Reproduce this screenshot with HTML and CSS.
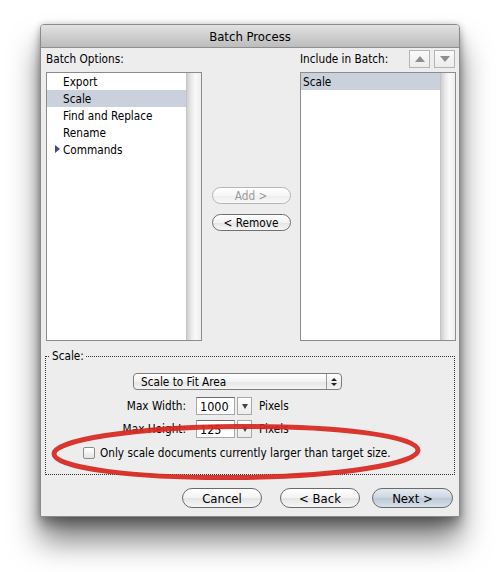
FILE: index.html
```html
<!DOCTYPE html>
<html lang="en">
<head>
    <meta charset="UTF-8">
    <title>Batch Process</title>
    <link rel="stylesheet" href="styles.css">
</head>
<body>
    <div class="window">
        <div class="titlebar">Batch Process</div>
        <div class="window-body">
            <div class="batch">
                <div class="col">
                    <div class="col-head">Batch Options:</div>
                    <div class="list">
                        <ul class="items">
                            <li>Export</li>
                            <li class="selected">Scale</li>
                            <li>Find and Replace</li>
                            <li>Rename</li>
                            <li><span class="disclosure"></span>Commands</li>
                        </ul>
                        <div class="scrollbar"></div>
                    </div>
                </div>
                <div class="middle">
                    <button class="pill disabled">Add &gt;</button>
                    <button class="pill">&lt; Remove</button>
                </div>
                <div class="col">
                    <div class="col-head">
                        <span>Include in Batch:</span>
                        <div class="order-buttons">
                            <button class="square"><span class="tri-up"></span></button>
                            <button class="square"><span class="tri-down"></span></button>
                        </div>
                    </div>
                    <div class="list">
                        <ul class="items included">
                            <li class="selected">Scale</li>
                        </ul>
                        <div class="scrollbar"></div>
                    </div>
                </div>
            </div>

            <fieldset class="options">
                <legend>Scale:</legend>
                <div class="popup">
                    <span class="popup-label">Scale to Fit Area</span>
                    <span class="popup-arrows">
                        <span class="mini-up"></span>
                        <span class="mini-down"></span>
                    </span>
                </div>
                <div class="field-row">
                    <span class="field-label">Max Width:</span>
                    <span class="text-box">1000</span>
                    <span class="combo-btn"><span class="tri-down dark"></span></span>
                    <span class="unit">Pixels</span>
                </div>
                <div class="field-row">
                    <span class="field-label">Max Height:</span>
                    <span class="text-box">125</span>
                    <span class="combo-btn"><span class="tri-down dark"></span></span>
                    <span class="unit">Pixels</span>
                </div>
                <label class="check-row">
                    <span class="checkbox"></span>
                    Only scale documents currently larger than target size.
                </label>
            </fieldset>

            <div class="actions">
                <button class="pill big">Cancel</button>
                <button class="pill big back">&lt; Back</button>
                <button class="pill big default">Next &gt;</button>
            </div>
        </div>

        <!-- red marker ring drawn over the checkbox -->
        <svg class="annotation" width="420" height="493" viewBox="0 0 420 493">
            <ellipse cx="196" cy="428" rx="182" ry="25.5" transform="rotate(-0.6 196 428)"
                     fill="none" stroke="#d8261f" stroke-width="5" opacity="0.92"/>
        </svg>
    </div>
</body>
</html>
```

FILE: styles.css
```css
* {
    box-sizing: border-box;
}

html {
    background: #ffffff;
}

body {
    margin: 0;
    min-height: 572px;
    padding: 24px 0 0 40px;
    background: #ffffff;
    font-family: "DejaVu Sans Condensed", "DejaVu Sans", "Liberation Sans", sans-serif;
    font-size: 11.7px;
    color: #000;
}

.window {
    position: relative;
    width: 420px;
    height: 493px;
    background: #ededed;
    border: 1px solid #8a8a8a;
    border-radius: 4px 4px 0 0;
    box-shadow: 0 24px 30px rgba(0, 0, 0, 0.5), 0 8px 12px rgba(0, 0, 0, 0.3), 0 0 6px rgba(0, 0, 0, 0.18);
}

.titlebar {
    height: 23px;
    line-height: 23px;
    text-align: center;
    font-size: 13px;
    background: linear-gradient(#e2e2e2, #bcbcbc);
    border-bottom: 1px solid #8f8f8f;
    border-radius: 3px 3px 0 0;
}

.window-body {
    padding: 0 3px 0 5px;
}

/* top part: two lists and the move buttons */
.batch {
    display: flex;
}

.col {
    width: 156px;
}

.col-head {
    height: 24px;
    padding-bottom: 2px;
    display: flex;
    align-items: center;
    justify-content: space-between;
}

.order-buttons {
    display: flex;
    gap: 4px;
    margin-right: 1px;
}

.square {
    width: 21px;
    height: 18px;
    padding: 0;
    border: 1px solid #b4b4b4;
    background: linear-gradient(#fafafa, #ececec);
    display: flex;
    align-items: center;
    justify-content: center;
}

.tri-up,
.tri-down {
    width: 0;
    height: 0;
    border-left: 5px solid transparent;
    border-right: 5px solid transparent;
}

.tri-up {
    border-bottom: 6px solid #8e8e8e;
}

.tri-down {
    border-top: 6px solid #8e8e8e;
}

.tri-down.dark {
    border-left-width: 3.5px;
    border-right-width: 3.5px;
    border-top: 5px solid #444;
}

.list {
    height: 269px;
    background: #fff;
    border: 1px solid #8c8c8c;
    display: flex;
}

.items {
    flex: 1;
    list-style: none;
    margin: 0;
    padding: 0;
}

.items li {
    height: 17px;
    line-height: 17px;
    padding-top: 1px;
    padding-left: 16px;
    position: relative;
}

.items.included li {
    padding-left: 2px;
}

.items li.selected {
    background: #cbd1dc;
}

.disclosure {
    position: absolute;
    left: 8px;
    top: 4px;
    width: 0;
    height: 0;
    border-top: 4.5px solid transparent;
    border-bottom: 4.5px solid transparent;
    border-left: 5px solid #3d4a86;
}

.scrollbar {
    width: 15px;
    border-left: 1px solid #c4c4c4;
    background: linear-gradient(to right, #cfcfcf, #e9e9e9 30%, #f9f9f9 60%, #eeeeee);
}

.middle {
    width: 98px;
    padding-top: 139px;
    display: flex;
    flex-direction: column;
    align-items: center;
    gap: 10px;
}

.pill {
    width: 79px;
    height: 17px;
    padding: 0;
    font-family: inherit;
    font-size: 11.7px;
    color: #000;
    border: 1px solid #6f6f6f;
    border-radius: 9px;
    background: linear-gradient(#ffffff, #f2f2f2 50%, #e4e4e4 51%, #f6f6f6);
}

.pill.disabled {
    color: #9b9b9b;
    border-color: #b5b5b5;
    background: linear-gradient(#ffffff, #f6f6f6 50%, #eeeeee 51%, #f8f8f8);
}

/* scale options group */
.options {
    margin: 8px 0 0 -1px;
    width: 410px;
    padding: 10px 0 14px 0;
    border: 1px dotted #333;
}

.options legend {
    margin-left: 4px;
    padding: 0 2px;
    line-height: 14px;
}

.popup {
    margin-left: 87px;
    width: 209px;
    height: 17px;
    border: 1px solid #7c7c7c;
    border-radius: 4px;
    background: linear-gradient(#ffffff, #f3f3f3 50%, #e5e5e5 51%, #f4f4f4);
    display: flex;
    align-items: center;
}

.popup-label {
    flex: 1;
    padding-left: 7px;
}

.popup-arrows {
    width: 15px;
    height: 100%;
    border-left: 1px solid #9a9a9a;
    display: flex;
    flex-direction: column;
    align-items: center;
    justify-content: center;
    gap: 2px;
}

.mini-up,
.mini-down {
    width: 0;
    height: 0;
    border-left: 3px solid transparent;
    border-right: 3px solid transparent;
}

.mini-up {
    border-bottom: 3.5px solid #222;
}

.mini-down {
    border-top: 3.5px solid #222;
}

.field-row {
    display: flex;
    align-items: center;
    height: 18px;
    margin-top: 7px;
}

.field-row + .field-row {
    margin-top: 5px;
}

.field-label {
    width: 140px;
    text-align: right;
    margin-right: 10px;
}

.text-box {
    width: 39px;
    height: 18px;
    line-height: 17px;
    padding-left: 3px;
    font-size: 12.5px;
    background: #fff;
    border: 1px solid #a8a8a8;
    border-top-color: #6c6c6c;
}

.combo-btn {
    width: 15px;
    height: 18px;
    margin-left: 2px;
    border: 1px solid #a8a8a8;
    background: linear-gradient(#fdfdfd, #ececec);
    display: flex;
    align-items: center;
    justify-content: center;
}

.unit {
    margin-left: 7px;
}

.check-row {
    display: flex;
    align-items: center;
    margin: 8px 0 0 37px;
    gap: 5px;
}

.checkbox {
    width: 12px;
    height: 12px;
    border: 1px solid #8c8c8c;
    border-radius: 2px;
    background: linear-gradient(#ffffff, #e4e4e4);
}

/* bottom buttons */
.actions {
    display: flex;
    justify-content: flex-end;
    margin: 13px 3px 0 0;
}

.pill.big {
    width: 80px;
    height: 20px;
    font-size: 13px;
    border-radius: 10px;
    border-color: #6a6a6a;
}

.pill.back {
    margin: 0 12px 0 18px;
}

.pill.default {
    width: 81px;
    background: linear-gradient(#e6ebf2, #ccd5e1 50%, #bcc8d7 51%, #d8e0ea);
}

.annotation {
    position: absolute;
    left: -1px;
    top: -1px;
    pointer-events: none;
}
```
